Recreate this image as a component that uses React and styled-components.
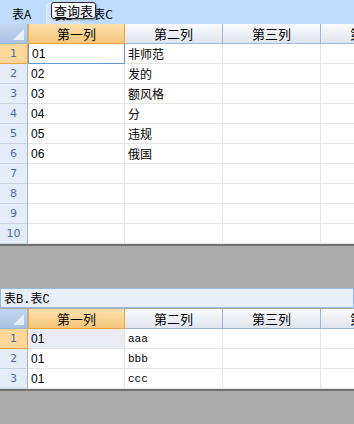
import React from "react";
import styled, { createGlobalStyle, css } from "styled-components";

const Global = createGlobalStyle`
  html, body { margin: 0; padding: 0; overflow: hidden; }
  body { font-family: "Liberation Sans", "Noto Sans CJK SC", sans-serif; }
`;

const Page = styled.div`
  width: 354px;
  height: 424px;
  background: #ababab;
  display: flex;
  flex-direction: column;
  overflow: hidden;
`;

const TabBar = styled.div`
  position: relative;
  height: 24px;
  background: #bfdbfe;
  display: flex;
  align-items: flex-end;
  font-size: 12px;
`;

const Tab = styled.div`
  height: 21px;
  box-sizing: border-box;
  padding: 0 ${(p) => p.$padR}px 0 ${(p) => p.$padL}px;
  margin-left: ${(p) => p.$ml || 0}px;
  display: flex;
  align-items: center;
  color: #000;
  font-family: "Noto Sans CJK SC", sans-serif;
  font-size: 12px;
  ${(p) =>
    p.$active &&
    css`
      background: #cfe3fc;
      border: 1px solid #e4effd;
      border-bottom: none;
      border-radius: 4px 4px 0 0;
    `}
`;

const Tooltip = styled.div`
  position: absolute;
  left: 51px;
  top: 2px;
  height: 17px;
  box-sizing: border-box;
  padding: 0 2px;
  border: 1px solid #2b2b2b;
  border-radius: 3px;
  background: linear-gradient(#ffffff, #e9eef5);
  box-shadow: 1px 1px 2px rgba(0, 0, 0, 0.35);
  font-family: "Noto Sans CJK SC", sans-serif;
  font-size: 13px;
  line-height: 15px;
  color: #000;
`;

const Sheet = styled.div`
  background: #fff;
  border-bottom: 2px solid #707070;
  display: grid;
  grid-template-columns: 28px 97px 98px 98px 98px;
  grid-auto-rows: 20px;
  overflow: hidden;
`;

const Corner = styled.div`
  position: relative;
  box-sizing: border-box;
  background: linear-gradient(#c1d5ee, #a9c2e4);
  border-right: 1px solid #9eb6ce;
  border-bottom: 1px solid #9eb6ce;
  &::after {
    content: "";
    position: absolute;
    right: 3px;
    bottom: 3px;
    width: 0;
    height: 0;
    border-left: 11px solid transparent;
    border-bottom: 11px solid #e8eff9;
  }
`;

const ColHead = styled.div`
  box-sizing: border-box;
  display: flex;
  align-items: center;
  justify-content: center;
  font-family: "Noto Sans CJK SC", sans-serif;
  font-size: 13px;
  color: #000;
  white-space: nowrap;
  overflow: hidden;
  background: linear-gradient(#f9fafc, #dfe5ee);
  border-right: 1px solid #9eb6ce;
  border-bottom: 1px solid #9eb6ce;
  ${(p) =>
    p.$sel &&
    css`
      background: linear-gradient(#fbe0ad, #f6c67b);
      border: 1px solid #f2a23a;
      border-top: none;
      border-right: 1px solid #f2a23a;
    `}
`;

const RowHead = styled.div`
  box-sizing: border-box;
  display: flex;
  align-items: center;
  justify-content: center;
  font-family: "DejaVu Sans", sans-serif;
  font-size: 11px;
  color: #3d71ad;
  background: #e4ecf7;
  border-right: 1px solid #9eb6ce;
  border-bottom: 1px solid #c5d3e3;
  ${(p) =>
    p.$sel &&
    css`
      background: #fbd79c;
      border-right: 1px solid #f2a23a;
      border-bottom: 1px solid #f2a23a;
    `}
`;

const Cell = styled.div`
  box-sizing: border-box;
  display: flex;
  align-items: center;
  padding-left: 3px;
  white-space: nowrap;
  overflow: hidden;
  color: #000;
  font-size: 12px;
  font-family: ${(p) =>
    p.$mono
      ? '"Liberation Mono", "Noto Sans CJK SC", monospace'
      : '"Liberation Sans", "Noto Sans CJK SC", sans-serif'};
  ${(p) => p.$mono && css`font-size: 11px;`}
  border-right: 1px solid #e6e6e6;
  border-bottom: 1px solid #e6e6e6;
  background: ${(p) => (p.$shade ? "#e9ecf4" : "#fff")};
  ${(p) =>
    p.$active &&
    css`
      border: 1px solid #5c97d6;
      border-top: none;
    `}
`;

const Gap = styled.div`
  height: 42px;
  flex: none;
`;

const FormulaBar = styled.div`
  height: 20px;
  box-sizing: border-box;
  background: #e8eff9;
  border: 1px solid #9ab9de;
  padding-left: 3px;
  display: flex;
  align-items: center;
  font-family: "Liberation Mono", "Noto Sans CJK SC", monospace;
  font-size: 12px;
  color: #000;
  margin-bottom: 1px;
`;

const cols = ["第一列", "第二列", "第三列", "第四列"];

function Grid({ rows, count, mono, activeFirst, shadeFirst }) {
  const out = [];
  out.push(<Corner key="c" />);
  cols.forEach((c, i) =>
    out.push(
      <ColHead key={"h" + i} $sel={i === 0}>
        {c}
      </ColHead>
    )
  );
  for (let r = 0; r < count; r++) {
    const data = rows[r] || ["", "", "", ""];
    out.push(
      <RowHead key={"r" + r} $sel={r === 0}>
        {r + 1}
      </RowHead>
    );
    for (let c = 0; c < 4; c++) {
      out.push(
        <Cell
          key={r + "-" + c}
          $mono={mono && c === 1}
          $active={activeFirst && r === 0 && c === 0}
          $shade={shadeFirst && r === 0 && c === 0}
        >
          {data[c] || ""}
        </Cell>
      );
    }
  }
  return <Sheet>{out}</Sheet>;
}

const topRows = [
  ["01", "非师范"],
  ["02", "发的"],
  ["03", "额风格"],
  ["04", "分"],
  ["05", "违规"],
  ["06", "俄国"],
];

const bottomRows = [
  ["01", "aaa"],
  ["01", "bbb"],
  ["01", "ccc"],
];

export default function App() {
  return (
    <Page>
      <Global />
      <TabBar>
        <Tab $padL={12} $padR={6}>表A</Tab>
        <Tab $active $ml={9} $padL={6} $padR={6}>表B</Tab>
        <Tab $padL={13} $padR={8}>表C</Tab>
        <Tooltip>查询表</Tooltip>
      </TabBar>
      <Grid rows={topRows} count={10} activeFirst />
      <Gap />
      <FormulaBar>表B.表C</FormulaBar>
      <Grid rows={bottomRows} count={3} mono shadeFirst />
    </Page>
  );
}
